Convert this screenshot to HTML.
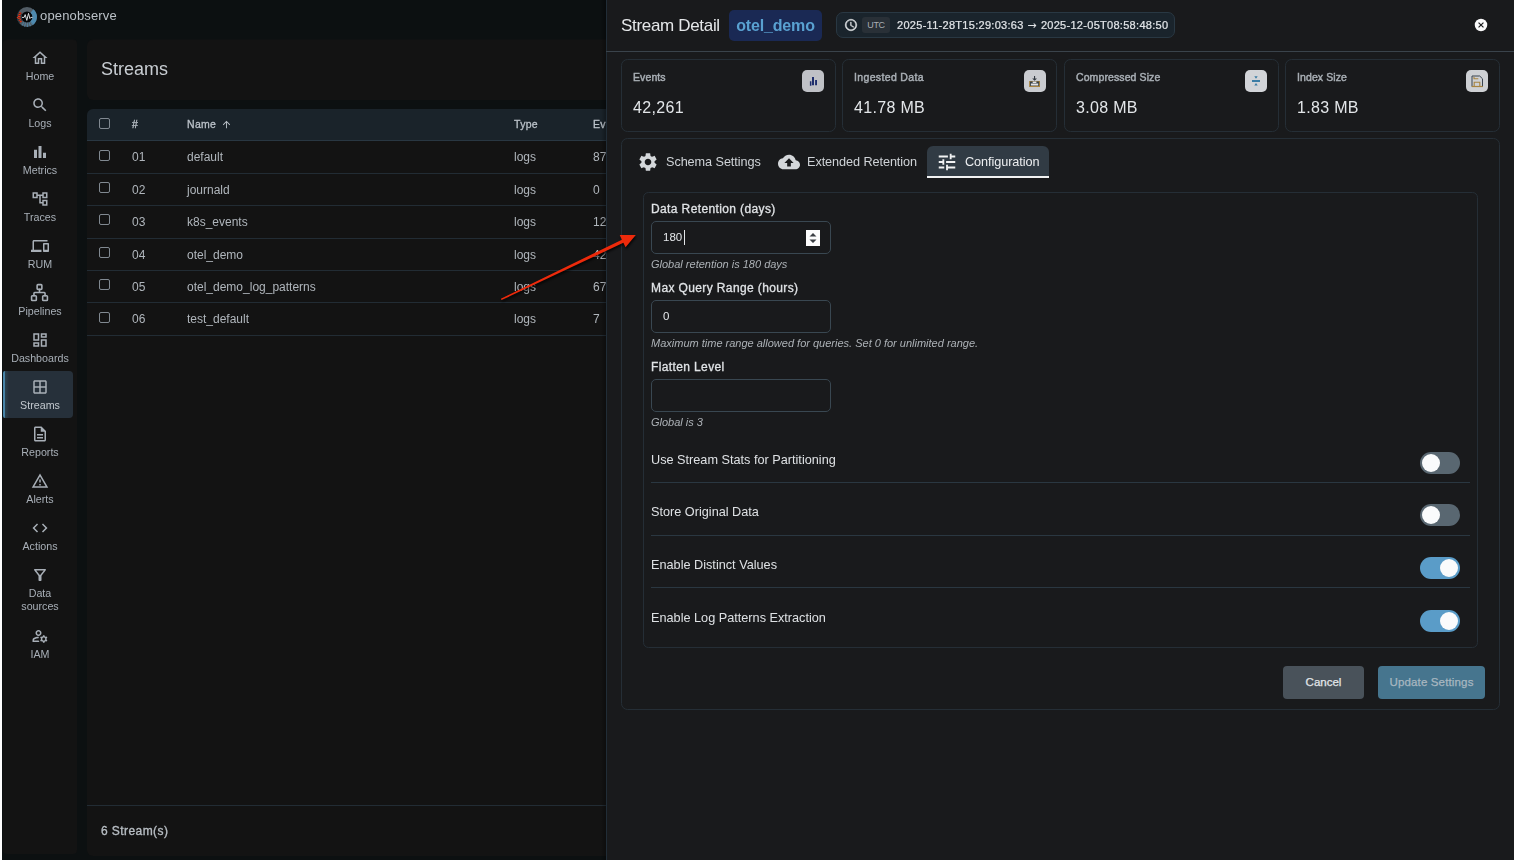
<!DOCTYPE html>
<html lang="en">
<head>
<meta charset="utf-8">
<title>Streams - OpenObserve</title>
<style>
*{box-sizing:border-box;margin:0;padding:0}
html,body{width:1514px;height:860px;overflow:hidden}
body{background:#0c1011;font-family:"Liberation Sans",sans-serif;color:#c9ced3;position:relative;font-size:12px}
.abs{position:absolute}
.strip{left:0;top:0;width:2px;height:860px;background:#fff}
/* top bar */
.brand{left:40px;top:4.500px;height:22px;line-height:22px;font-size:13px;color:#bcc2c8;letter-spacing:.15px;white-space:nowrap}
/* sidebar */
.side{box-shadow:0 -1px 0 #101213;left:3px;top:40px;width:74px;height:814px;background:#141414;border-radius:4px}
.nav{position:absolute;left:0;width:74px;text-align:center;color:#a9b0b8;font-size:10.700px;line-height:13px}
.nav svg{position:absolute;left:28px;top:.8px;width:18px;height:18px;fill:#a9b0b8}
.nav span{position:absolute;left:0;width:74px;top:22px}
.nav.active{color:#c3c9cf}
.navbg{left:0;top:331px;width:70px;height:47px;background:linear-gradient(90deg,#4a86aa 0,#4a86aa 1.500px,#2f4654 1.500px,#27313b 6px,#27313b 100%);border-radius:2px 4px 4px 2px}
/* streams panel */
.title{box-shadow:0 -1px 0 #101213;left:87px;top:40px;width:540px;height:60px;background:#141414;border-radius:6px 0 0 6px}
.title h1{position:absolute;left:14px;top:17px;font-size:18px;font-weight:400;color:#c9ced3;line-height:24px}
.tbl{left:87px;top:109px;width:540px;height:747px;background:#141414;border-radius:6px 0 0 6px;overflow:hidden}
.thead{left:0;top:0;width:540px;height:32px;background:#1b242b;border-bottom:1px solid #2a3843}
.row{left:0;width:540px;height:33px;border-bottom:1px solid #232d35}
.cell{position:absolute;top:0;line-height:32px;font-size:12px;color:#b1b7bd;white-space:nowrap}
.thead .cell{font-weight:400;-webkit-text-stroke:.3px #bcc3ca;color:#bcc3ca;font-size:10.500px;letter-spacing:.3px;line-height:31px}
.cb{position:absolute;left:12px;width:11px;height:11px;border:1.500px solid #828a92;border-radius:2px}
.foot{left:0;top:696px;width:540px;height:50px;border-top:1px solid #232d35}
.foot b{position:absolute;left:14px;top:17px;font-weight:400;-webkit-text-stroke:.35px;letter-spacing:.42px;font-size:12px;color:#b9bfc5;line-height:16px}
/* drawer */
.shadow{left:601px;top:0;width:5px;height:860px;background:linear-gradient(90deg,rgba(0,0,0,0),rgba(0,0,0,.3))}
.drawer{left:606px;top:0;width:908px;height:860px;background:#1a1b1d}
.dedge{left:0;top:0;width:1px;height:860px;background:#222e38}
.dhead{left:0;top:0;width:908px;height:52px;border-bottom:1px solid #3b444c}
.card{border:1px solid #262f37;border-radius:6.500px}

/* drawer content (coords relative to drawer left=606) */
.dt{position:absolute;white-space:nowrap}
.sd{left:15px;top:13.500px;font-size:17px;line-height:24px;color:#e6e8ea;letter-spacing:-.32px}
.badge{left:123px;top:10px;width:93px;height:31px;background:#1b2a55;border-radius:5px;color:#5aa2d2;font-weight:700;font-size:16px;line-height:31px;text-align:center;letter-spacing:-.17px}
.pill{left:230px;top:12px;width:339px;height:26px;background:#1b252d;border:1px solid #2a3944;border-radius:7px}
.pill svg{position:absolute;left:7px;top:5px;width:14px;height:14px;fill:#dfe2e5;stroke:#dfe2e5;stroke-width:.7}
.utc{position:absolute;left:25px;top:4px;width:28px;height:16px;background:#2a3138;border-radius:3px;font-size:9px;line-height:16px;text-align:center;color:#a9afb5;letter-spacing:-.3px}
.dates{position:absolute;left:60px;top:0;line-height:24px;font-size:11px;font-weight:400;-webkit-text-stroke:.22px #e2e5e8;color:#e2e5e8;white-space:nowrap;letter-spacing:.29px}
.close{left:867.800px;top:17.800px;width:14px;height:14px}
.stat{top:59px;width:215px;height:73px}
.stat .l{position:absolute;left:11px;top:10px;font-size:10.500px;letter-spacing:.1px;font-weight:400;-webkit-text-stroke:.45px #a9afb5;color:#a9afb5;line-height:14px;white-space:nowrap}
.stat .v{position:absolute;left:11px;top:38px;font-size:16px;letter-spacing:.32px;color:#e4e7ea;line-height:20px;white-space:nowrap}
.stat .ib{position:absolute;right:11px;top:10px;width:22px;height:22px;border-radius:5px;background:#c6cacf}
.stat .ib svg{position:absolute;left:4px;top:4px;width:14px;height:14px}
.tabs{left:15px;top:138px;width:879px;height:572px}
.tab{position:absolute;top:8px;height:32px;font-size:12.700px;letter-spacing:-.08px;line-height:30px;color:#d0d4d8;white-space:nowrap}
.tab svg{position:absolute;top:4px;width:22px;height:22px;fill:#d5d8db}
.tab.on{background:#323c45;border-radius:6px 6px 0 0;border-bottom:2px solid #f2f3f4;color:#eef0f2}
.cfg{left:37px;top:192px;width:835px;height:456px;border-radius:5.500px}
.lab{left:45px;font-size:12px;font-weight:400;-webkit-text-stroke:.3px #e1e4e7;color:#e1e4e7;line-height:16px;letter-spacing:.38px;margin-top:1px}
.inp{left:45px;width:180px;height:33px;border:1px solid #3a4852;border-radius:5px;background:#1a1b1d}
.inp span{position:absolute;left:11px;top:0;line-height:31px;font-size:11.5px;color:#e4e7ea}
.hint{left:45px;font-size:11px;font-style:italic;color:#aeb3b8;line-height:14px}
.tl{left:45px;font-size:12.700px;color:#dfe2e5;line-height:16px}
.sep{left:45px;width:819px;height:1px;background:#2b3842}
.tg{left:814px;width:40px;height:22px;border-radius:11px;background:#5a6872}
.tg i{position:absolute;top:2px;left:2px;width:18px;height:18px;border-radius:9px;background:#fbfcfd}
.tg.on{background:#5b9dc9}
.tg.on i{left:20px}
.btn{top:666px;height:33px;border-radius:4px;font-size:11.500px;line-height:33px;text-align:center;font-weight:400;-webkit-text-stroke:.25px;white-space:nowrap}
</style>
</head>
<body>
<div id="app" style="opacity:.999;position:absolute;left:0;top:0;width:1514px;height:860px;overflow:hidden">
<div class="abs strip"></div>

<!-- logo -->
<svg class="abs" style="left:16.100px;top:5.900px" width="22" height="22" viewBox="0 0 22 22">
  <circle cx="11" cy="11" r="7.750" fill="#050708" stroke="#535e67" stroke-width="4.400"/>
  <path d="M15.980 5.060A7.750 7.750 0 0 1 15.980 16.940" fill="none" stroke="#4f8bb0" stroke-width="4.400"/>
  <path d="M15.980 16.940A7.750 7.750 0 0 1 6.020 16.940" fill="none" stroke="#4f8bb0" stroke-width="4.400" stroke-dasharray="1 1.200" opacity=".75"/>
  <path d="M5.060 15.980A7.750 7.750 0 0 1 4.650 6.550" fill="none" stroke="#1d3944" stroke-width="4.400"/>
  <path d="M5.060 15.980A7.750 7.750 0 0 1 4.650 6.550" fill="none" stroke="#f5300c" stroke-width="2.600" stroke-dasharray="1.100 .700"/>
  <circle cx="1.400" cy="11.600" r=".700" fill="#f5300c"/>
  <path d="M6 11.400h2.100l1.100-2.800 1.600 5.800 1.700-7 1.400 5.200.9-1.200h1.800" fill="none" stroke="#d9dde0" stroke-width="1" stroke-linejoin="round"/>
</svg>
<div class="abs brand">openobserve</div>

<div class="abs side" id="side">
<div class="abs navbg"></div>
<div class="nav" style="top:8px"><svg viewBox="0 0 24 24"><path d="M12 5.69l5 4.5V18h-2v-6H9v6H7v-7.81l5-4.5M12 3L2 12h3v8h6v-6h2v6h6v-8h3L12 3z"/></svg><span>Home</span></div>
<div class="nav" style="top:55px"><svg viewBox="0 0 24 24"><path d="M15.5 14h-.79l-.28-.27C15.41 12.59 16 11.11 16 9.5 16 5.91 13.09 3 9.5 3S3 5.91 3 9.5 5.91 16 9.5 16c1.61 0 3.09-.59 4.23-1.57l.27.28v.79l5 4.99L20.49 19l-4.99-5zm-6 0C7.01 14 5 11.99 5 9.5S7.01 5 9.5 5 14 7.01 14 9.5 11.99 14 9.5 14z"/></svg><span>Logs</span></div>
<div class="nav" style="top:102px"><svg viewBox="0 0 24 24"><path d="M4 9h4v11H4zm12 4h4v7h-4zm-6-9h4v16h-4z"/></svg><span>Metrics</span></div>
<div class="nav" style="top:149px"><svg viewBox="0 0 24 24"><path d="M22 11V3h-7v3H9V3H2v8h7V8h2v10h4v3h7v-8h-7v3h-2V8h2v3h7zM7 9H4V5h3v4zm10 6h3v4h-3v-4zm0-10h3v4h-3V5z"/></svg><span>Traces</span></div>
<div class="nav" style="top:196px"><svg viewBox="0 0 24 24"><path d="M4 6h18V4H4c-1.1 0-2 .9-2 2v11H0v3h14v-3H4V6zm19 2h-6c-.55 0-1 .45-1 1v10c0 .55.45 1 1 1h6c.55 0 1-.45 1-1V9c0-.55-.45-1-1-1zm-1 9h-4v-7h4v7z"/></svg><span>RUM</span></div>
<div class="nav" style="top:243px"><svg viewBox="0 0 24 24" style="left:27.300px;top:.400px;width:19px;height:19px;fill:none;stroke:#a9b0b8;stroke-width:2;stroke-linecap:round;stroke-linejoin:round"><rect x="16" y="16" width="6" height="6" rx="1"/><rect x="2" y="16" width="6" height="6" rx="1"/><rect x="9" y="2" width="6" height="6" rx="1"/><path d="M5 16v-3a1 1 0 0 1 1-1h12a1 1 0 0 1 1 1v3M12 12V8"/></svg><span>Pipelines</span></div>
<div class="nav" style="top:290px"><svg viewBox="0 0 24 24"><path d="M19 5v2h-4V5h4M9 5v6H5V5h4m10 8v6h-4v-6h4M9 17v2H5v-2h4M21 3h-8v6h8V3zM11 3H3v10h8V3zm10 8h-8v10h8V11zm-10 4H3v6h8v-6z"/></svg><span>Dashboards</span></div>
<div class="nav active" style="top:337px"><svg viewBox="0 0 24 24"><path d="M19 3H5c-1.1 0-2 .9-2 2v14c0 1.1.9 2 2 2h14c1.1 0 2-.9 2-2V5c0-1.1-.9-2-2-2zm0 8h-6V5h6v6zm-8-6v6H5V5h6zm-6 8h6v6H5v-6zm8 6v-6h6v6h-6z"/></svg><span>Streams</span></div>
<div class="nav" style="top:384px"><svg viewBox="0 0 24 24"><path d="M8 16h8v2H8zm0-4h8v2H8zm6-10H6c-1.1 0-2 .9-2 2v16c0 1.1.89 2 1.99 2H18c1.1 0 2-.9 2-2V8l-6-6zm4 18H6V4h7v5h5v11z"/></svg><span>Reports</span></div>
<div class="nav" style="top:431px"><svg viewBox="0 0 24 24"><path d="M12 5.99L19.53 19H4.47L12 5.99M12 2L1 21h22L12 2zm1 14h-2v2h2v-2zm0-6h-2v4h2v-4z"/></svg><span>Alerts</span></div>
<div class="nav" style="top:478px"><svg viewBox="0 0 24 24"><path d="M9.4 16.6L4.8 12l4.6-4.6L8 6l-6 6 6 6 1.4-1.4zm5.2 0l4.6-4.6-4.6-4.6L16 6l6 6-6 6-1.4-1.4z"/></svg><span>Actions</span></div>
<div class="nav" style="top:525px"><svg viewBox="0 0 24 24"><path d="M7 6h10l-5.01 6.3L7 6zm-2.75-.39C6.27 8.2 10 13 10 13v6c0 .55.45 1 1 1h2c.55 0 1-.45 1-1v-6s3.72-4.8 5.74-7.39c.51-.66.04-1.61-.79-1.61H5.04c-.83 0-1.3.95-.79 1.61z"/></svg><span>Data<br>sources</span></div>
<div class="nav" style="top:586px"><svg viewBox="0 0 24 24"><path d="M4 18v-.65c0-.34.16-.66.41-.81C6.1 15.53 8.03 15 10 15c.03 0 .05 0 .08.01.1-.7.3-1.37.59-1.98-.22-.02-.44-.03-.67-.03-2.42 0-4.68.67-6.61 1.82-.88.52-1.39 1.5-1.39 2.53V20h9.26c-.42-.6-.75-1.28-.97-2H4zM10 12c2.21 0 4-1.79 4-4s-1.79-4-4-4-4 1.79-4 4 1.79 4 4 4zm0-6c1.1 0 2 .9 2 2s-.9 2-2 2-2-.9-2-2 .9-2 2-2zM20.75 16c0-.22-.03-.42-.06-.63l1.14-1.01-1-1.73-1.45.49c-.32-.27-.68-.48-1.08-.63L18 11h-2l-.3 1.49c-.4.15-.76.36-1.08.63l-1.45-.49-1 1.73 1.14 1.01c-.03.21-.06.41-.06.63s.03.42.06.63l-1.14 1.01 1 1.73 1.45-.49c.32.27.68.48 1.08.63L16 21h2l.3-1.49c.4-.15.76-.36 1.08-.63l1.45.49 1-1.73-1.14-1.01c.03-.21.06-.41.06-.63zM17 18c-1.1 0-2-.9-2-2s.9-2 2-2 2 .9 2 2-.9 2-2 2z"/></svg><span>IAM</span></div>
</div>

<div class="abs title"><h1>Streams</h1></div>
<div class="abs tbl" id="tbl">
<div class="abs thead"><i class="cb" style="top:9px"></i><div class="cell" style="left:45px">#</div><div class="cell" style="left:100px">Name <svg width="11" height="11" viewBox="0 0 24 24" style="vertical-align:-2px;margin-left:2px"><path d="M4 12l1.41 1.41L11 7.83V20h2V7.830l5.58 5.59L20 12l-8-8-8 8z" fill="#bcc3ca"/></svg></div><div class="cell" style="left:427px">Type</div><div class="cell" style="left:506px">Events</div></div>
<div class="abs row" style="top:32px;height:33px"><i class="cb" style="top:9px"></i><div class="cell" style="left:45px">01</div><div class="cell" style="left:100px">default</div><div class="cell" style="left:427px">logs</div><div class="cell" style="left:506px">87</div></div>
<div class="abs row" style="top:65px;height:32px"><i class="cb" style="top:8px"></i><div class="cell" style="left:45px">02</div><div class="cell" style="left:100px">journald</div><div class="cell" style="left:427px">logs</div><div class="cell" style="left:506px">0</div></div>
<div class="abs row" style="top:97px;height:33px"><i class="cb" style="top:8px"></i><div class="cell" style="left:45px">03</div><div class="cell" style="left:100px">k8s_events</div><div class="cell" style="left:427px">logs</div><div class="cell" style="left:506px">12</div></div>
<div class="abs row" style="top:130px;height:32px"><i class="cb" style="top:7.500px"></i><div class="cell" style="left:45px">04</div><div class="cell" style="left:100px">otel_demo</div><div class="cell" style="left:427px">logs</div><div class="cell" style="left:506px">42</div></div>
<div class="abs row" style="top:162px;height:32px"><i class="cb" style="top:8px"></i><div class="cell" style="left:45px">05</div><div class="cell" style="left:100px">otel_demo_log_patterns</div><div class="cell" style="left:427px">logs</div><div class="cell" style="left:506px">67</div></div>
<div class="abs row" style="top:194px;height:33px"><i class="cb" style="top:9px"></i><div class="cell" style="left:45px">06</div><div class="cell" style="left:100px">test_default</div><div class="cell" style="left:427px">logs</div><div class="cell" style="left:506px">7</div></div>
<div class="abs foot"><b>6 Stream(s)</b></div>
</div>

<div class="abs shadow"></div>
<div class="abs drawer" id="drawer">
<div class="abs dedge"></div>
<div class="abs dhead"></div>
<div class="dt sd">Stream Detail</div>
<div class="dt badge">otel_demo</div>
<div class="abs pill"><svg viewBox="0 0 24 24"><path d="M11.99 2C6.47 2 2 6.48 2 12s4.47 10 9.99 10C17.52 22 22 17.52 22 12S17.520 2 11.99 2zM12 20c-4.420 0-8-3.580-8-8s3.580-8 8-8 8 3.580 8 8-3.580 8-8 8zm.5-13H11v6l5.250 3.150.750-1.230-4.500-2.670z"/></svg><div class="utc">UTC</div><div class="dates">2025-11-28T15:29:03:63 <span style="font-family:'DejaVu Sans',sans-serif;-webkit-text-stroke:0;font-size:11px;letter-spacing:0;margin:0 1px 0 .3px">&rarr;</span> 2025-12-05T08:58:48:50</div></div>
<svg class="abs close" viewBox="0 0 24 24"><circle cx="12" cy="12" r="10.700" fill="#fbfbfc"/><path d="M7.800 7.800l8.400 8.400m0-8.400l-8.400 8.400" stroke="#1a1b1d" stroke-width="2"/></svg>

<div class="abs card stat" style="left:15px"><div class="l">Events</div><div class="v">42,261</div><div class="ib" style="background:#c0c2c7"><svg viewBox="0 0 14 14"><path d="M3.900 7.200h1.500v4.600H3.900zM6 3h2v8.200H6zM9.100 6H11v5.200H9.100z" fill="#1f2f6e"/></svg></div></div>
<div class="abs card stat" style="left:236px"><div class="l" style="letter-spacing:.35px">Ingested Data</div><div class="v">41.78 MB</div><div class="ib" style="background:#cbcdd1;right:10px"><svg viewBox="0 0 14 14"><path d="M1.100 7h10.900v6H1.100z" fill="#a98541"/><path d="M2 7.500h9.100v4.400H2z" fill="#3a4248"/><path d="M2.900 9.600h7.300v2H2.900zM4.700 7.400h3.700v1.500H4.700z" fill="#e3e4e7"/><path d="M6 2.100h1.100v2.300H9L6.600 6.800 4.200 4.400H6z" fill="#343b42"/></svg></div></div>
<div class="abs card stat" style="left:458px"><div class="l">Compressed Size</div><div class="v">3.08 MB</div><div class="ib" style="background:#d3d5d9"><svg viewBox="0 0 14 14"><path d="M3 6h8v2H3zM5.300 2.300h3.400L7 4.700zM5.300 11.500h3.400L7 9.100z" fill="#3d7ea6"/></svg></div></div>
<div class="abs card stat" style="left:679px"><div class="l">Index Size</div><div class="v">1.83 MB</div><div class="ib" style="background:#cfd1d5"><svg viewBox="0 0 14 14"><path d="M2 2h7.700L12.500 4.800V12.500H2z" fill="none" stroke="#3a4450" stroke-width="1"/><path d="M1.700 12.500h11.100" stroke="#a98541" stroke-width="1.200"/><path d="M4 2.700v2h4.300M4.200 12v-3.800h5.600V12" fill="none" stroke="#a98541" stroke-width="1.100"/></svg></div></div>

<div class="abs card tabs"></div>
<div class="tab" style="left:31px;top:147px;width:130px"><svg viewBox="0 0 24 24" style="left:0"><path d="M19.14 12.94c.04-.3.06-.61.06-.94 0-.32-.02-.64-.07-.94l2.03-1.58c.18-.14.23-.41.12-.61l-1.920-3.320c-.12-.22-.37-.29-.59-.22l-2.390.96c-.5-.38-1.030-.7-1.620-.94l-.36-2.540c-.04-.24-.24-.41-.48-.41h-3.840c-.24 0-.43.17-.47.41l-.36 2.540c-.59.24-1.130.57-1.620.94l-2.390-.96c-.22-.08-.47 0-.59.22L2.740 8.870c-.12.21-.08.47.12.61l2.030 1.580c-.05.3-.09.63-.09.94s.02.64.07.94l-2.030 1.580c-.18.14-.23.41-.12.61l1.920 3.320c.12.22.37.29.59.22l2.390-.96c.5.38 1.030.7 1.620.94l.36 2.540c.05.24.24.41.48.41h3.840c.24 0 .44-.17.47-.41l.36-2.540c.59-.24 1.130-.56 1.620-.94l2.390.96c.22.08.47 0 .59-.22l1.920-3.320c.12-.22.07-.47-.12-.61l-2.010-1.580zM12 15.600c-1.980 0-3.600-1.620-3.600-3.600s1.620-3.600 3.600-3.600 3.600 1.620 3.600 3.600-1.620 3.600-3.600 3.600z"/></svg><span style="position:absolute;left:29px">Schema Settings</span></div>
<div class="tab" style="left:172px;top:147px;width:150px"><svg viewBox="0 0 24 24" style="left:0"><path d="M19.350 10.040C18.670 6.590 15.640 4 12 4 9.110 4 6.600 5.640 5.350 8.040 2.340 8.360 0 10.910 0 14c0 3.310 2.690 6 6 6h13c2.760 0 5-2.240 5-5 0-2.640-2.050-4.780-4.650-4.960zM14 13v4h-4v-4H7l5-5 5 5h-3z"/></svg><span style="position:absolute;left:29px">Extended Retention</span></div>
<div class="tab on" style="left:321px;top:146px;width:122px"><svg viewBox="0 0 24 24" style="left:9px;top:4.800px;fill:#f2f3f4"><path d="M3 17v2h6v-2H3zM3 5v2h10V5H3zm10 16v-2h8v-2h-8v-2h-2v6h2zM7 9v2H3v2h4v2h2V9H7zm14 4v-2H11v2h10zm-6-4h2V7h4V5h-4V3h-2v6z"/></svg><span style="position:absolute;left:38px;top:.8px">Configuration</span></div>

<div class="abs card cfg"></div>
<div class="dt lab" style="top:200px">Data Retention (days)</div>
<div class="abs inp" style="top:221px"><span>180</span><b style="position:absolute;left:32px;top:8px;width:1px;height:15px;background:#e4e7ea"></b><svg style="position:absolute;left:154px;top:7.600px" width="14" height="16" viewBox="0 0 14 16"><rect width="14" height="16" fill="#fdfdfd"/><path d="M3.500 6.500L7 3l3.500 3.500zM3.500 9.500L7 13l3.500-3.500z" fill="#3b3f44"/></svg></div>
<div class="dt hint" style="top:257px">Global retention is 180 days</div>
<div class="dt lab" style="top:279px">Max Query Range (hours)</div>
<div class="abs inp" style="top:300px"><span>0</span></div>
<div class="dt hint" style="top:336px">Maximum time range allowed for queries. Set 0 for unlimited range.</div>
<div class="dt lab" style="top:358px">Flatten Level</div>
<div class="abs inp" style="top:379px"></div>
<div class="dt hint" style="top:415px">Global is 3</div>

<div class="dt tl" style="top:451.500px">Use Stream Stats for Partitioning</div><div class="abs tg" style="top:452px"><i></i></div>
<div class="abs sep" style="top:482px"></div>
<div class="dt tl" style="top:504px">Store Original Data</div><div class="abs tg" style="top:504px"><i></i></div>
<div class="abs sep" style="top:535px"></div>
<div class="dt tl" style="top:556.500px">Enable Distinct Values</div><div class="abs tg on" style="top:557px"><i></i></div>
<div class="abs sep" style="top:587px"></div>
<div class="dt tl" style="top:609.500px">Enable Log Patterns Extraction</div><div class="abs tg on" style="top:610px"><i></i></div>

<div class="abs btn" style="left:677px;width:81px;background:#4a535b;color:#e4e7ea">Cancel</div>
<div class="abs btn" style="left:772px;width:107px;background:#47768f;color:#a9b8c1;letter-spacing:.15px">Update Settings</div>
</div>
<svg class="abs" style="left:480px;top:220px" width="180" height="100" viewBox="480 220 180 100">
    <path d="M500.850 298.680L621.900 239.680L619.700 235.080L635.800 234.900L625.580 247.340L623.370 242.740L501.550 300.120z" fill="#000" opacity=".7" style="filter:blur(.9px)" transform="translate(.8 1.800)"/>
  <path d="M500.850 298.680L621.900 239.680L619.700 235.080L635.800 234.900L625.580 247.340L623.370 242.740L501.550 300.120z" fill="#ee2b0c"/>
</svg>
</div>
</body>
</html>
